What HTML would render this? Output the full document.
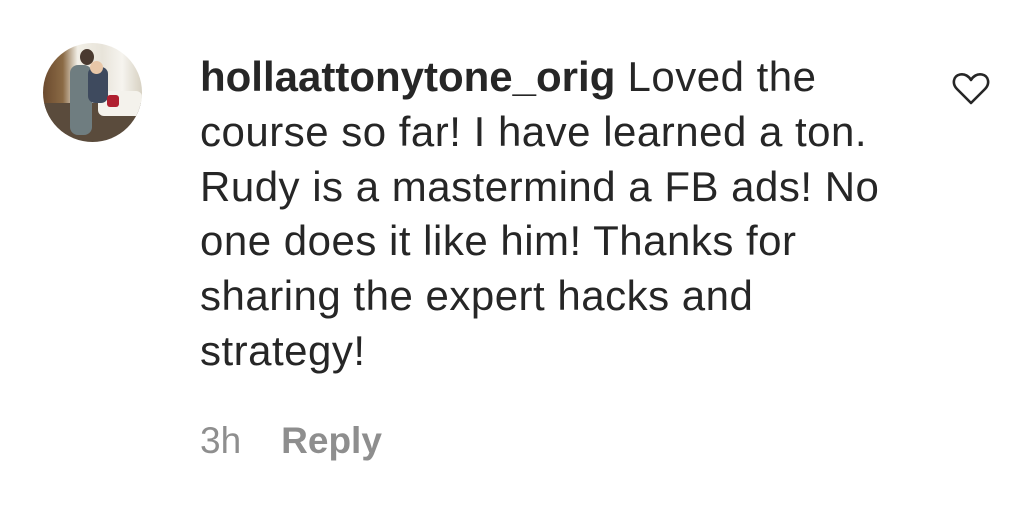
<html><head><style>
body{margin:0;width:1022px;height:508px;background:#fff;position:relative;font-family:"Liberation Sans",Arial,sans-serif;overflow:hidden}
.av{position:absolute;left:43px;top:43px;width:99px;height:99px;border-radius:50%;overflow:hidden;background:linear-gradient(90deg,#6b4a2e 0%,#8a6a45 20%,#f2efe6 35%,#e8e4da 60%,#f6f4ef 80%,#d7d1c2 100%)}
.t{position:absolute;left:200px;top:50px;font-size:42px;line-height:54.8px;color:#262626;white-space:nowrap;letter-spacing:0.5px}
.t b{font-weight:bold;letter-spacing:0}
.m{position:absolute;left:200px;top:420px;font-size:37px;color:#8e8e8e}
</style></head><body>
<div class="av">
<div style="position:absolute;left:0;top:60px;width:99px;height:40px;background:#5a4b3c"></div>
<div style="position:absolute;left:55px;top:48px;width:44px;height:25px;background:#f4f2ec;border-radius:6px"></div>
<div style="position:absolute;left:27px;top:22px;width:22px;height:70px;background:#6f7d80;border-radius:8px"></div>
<div style="position:absolute;left:37px;top:6px;width:14px;height:16px;background:#4a3a30;border-radius:50%"></div>
<div style="position:absolute;left:45px;top:24px;width:20px;height:36px;background:#3e4a5e;border-radius:7px"></div>
<div style="position:absolute;left:47px;top:18px;width:13px;height:13px;background:#e8c7a8;border-radius:50%"></div>
<div style="position:absolute;left:64px;top:52px;width:12px;height:12px;background:#b02030;border-radius:3px"></div>
</div>
<div class="t"><b>hollaattonytone_orig</b> Loved the<br>course so far! I have learned a ton.<br>Rudy is a mastermind a FB ads! No<br>one does it like him! Thanks for<br>sharing the expert hacks and<br>strategy!</div>
<div class="m">3h<span style="display:inline-block;width:40px"></span><b>Reply</b></div>
<svg style="position:absolute;left:952px;top:72px" width="38" height="34" viewBox="0 0 38 34"><path d="M19 31 L5 17 C0 12 1 4 8 2.5 C13 1.5 17 4.5 19 8 C21 4.5 25 1.5 30 2.5 C37 4 38 12 33 17 Z" fill="none" stroke="#262626" stroke-width="2.6" stroke-linejoin="round"/></svg>
</body></html>
